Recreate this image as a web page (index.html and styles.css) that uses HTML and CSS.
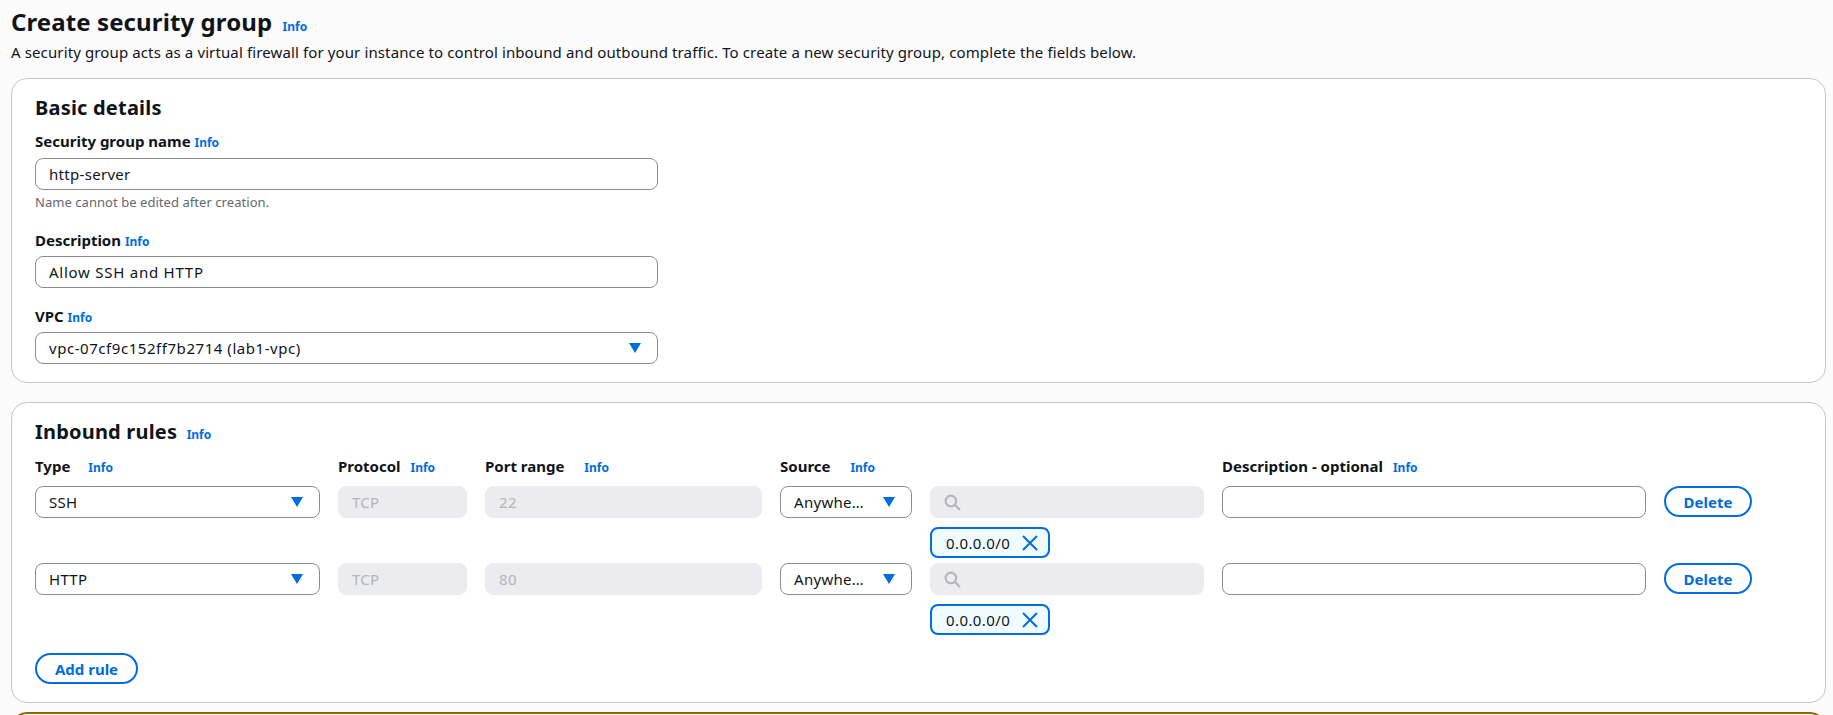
FILE: index.html
```html
<!DOCTYPE html>
<html lang="en">
<head>
  <meta charset="UTF-8" />
  <title>Create security group</title>
  <link rel="stylesheet" href="styles.css">
</head>
<body>
  <div class="page">
    <div class="page-head">
      <h1>Create security group <a class="info" href="#">Info</a></h1>
      <p>A security group acts as a virtual firewall for your instance to control inbound and outbound traffic. To create a new security group, complete the fields below.</p>
    </div>

    <section class="card card-basic">
      <h2>Basic details</h2>
      <div class="field">
        <label>Security group name <a class="info" href="#">Info</a></label>
        <div class="input">http-server</div>
        <div class="hint">Name cannot be edited after creation.</div>
      </div>
      <div class="field">
        <label>Description <a class="info" href="#">Info</a></label>
        <div class="input caps">Allow SSH and HTTP</div>
      </div>
      <div class="field">
        <label>VPC <a class="info" href="#">Info</a></label>
        <div class="input select vpc">
          <span>vpc-07cf9c152ff7b2714 (lab1-vpc)</span>
          <svg class="caret" viewBox="0 0 12 10"><path d="M0 0h12L6 10z"/></svg>
        </div>
      </div>
    </section>

    <section class="card card-rules">
      <h2>Inbound rules <a class="info" href="#">Info</a></h2>
      <div class="rules">
        <div class="col-label">Type <a class="info gap-14" href="#">Info</a></div>
        <div class="col-label">Protocol <a class="info gap-6" href="#">Info</a></div>
        <div class="col-label">Port range <a class="info gap-16" href="#">Info</a></div>
        <div class="col-label">Source <a class="info gap-16" href="#">Info</a></div>
        <div></div>
        <div class="col-label">Description - optional <a class="info gap-6" href="#">Info</a></div>
        <div></div>

        <div class="input select"><span>SSH</span><svg class="caret" viewBox="0 0 12 10"><path d="M0 0h12L6 10z"/></svg></div>
        <div class="input disabled">TCP</div>
        <div class="input disabled">22</div>
        <div class="input select"><span>Anywhe…</span><svg class="caret" viewBox="0 0 12 10"><path d="M0 0h12L6 10z"/></svg></div>
        <div class="source-cell">
          <div class="input disabled search">
            <svg viewBox="0 0 16 16"><circle cx="6.5" cy="6.5" r="5"/><path d="M10.2 10.2 15 15"/></svg>
          </div>
          <div class="token">0.0.0.0/0 <svg viewBox="0 0 16 16"><path d="M1 1l14 14M15 1 1 15"/></svg></div>
        </div>
        <div class="input"></div>
        <button class="btn">Delete</button>

        <div class="input select"><span>HTTP</span><svg class="caret" viewBox="0 0 12 10"><path d="M0 0h12L6 10z"/></svg></div>
        <div class="input disabled">TCP</div>
        <div class="input disabled">80</div>
        <div class="input select"><span>Anywhe…</span><svg class="caret" viewBox="0 0 12 10"><path d="M0 0h12L6 10z"/></svg></div>
        <div class="source-cell">
          <div class="input disabled search">
            <svg viewBox="0 0 16 16"><circle cx="6.5" cy="6.5" r="5"/><path d="M10.2 10.2 15 15"/></svg>
          </div>
          <div class="token">0.0.0.0/0 <svg viewBox="0 0 16 16"><path d="M1 1l14 14M15 1 1 15"/></svg></div>
        </div>
        <div class="input"></div>
        <button class="btn">Delete</button>
      </div>
      <button class="btn add-rule">Add rule</button>
    </section>

    <section class="card card-warning"></section>
  </div>
</body>
</html>
```

FILE: styles.css
```css
html, body {
  margin: 0;
  height: 100%;
  overflow: hidden;
}

body {
  font-family: "Noto Sans", sans-serif;
  font-size: 15px;
  color: #0f141a;
  background: #fbfbfc;
}

.page {
  box-sizing: border-box;
  height: 100vh;
  overflow: hidden;
  padding: 0 7px 0 11px;
}

.page-head {
  height: 78px;
  padding-top: 9px;
  box-sizing: border-box;
}

h1 {
  margin: 0;
  font-size: 24px;
  line-height: 26px;
  font-weight: 700;
  letter-spacing: .1px;
}

.page-head p {
  margin: 7px 0 0;
  line-height: 20px;
  letter-spacing: .12px;
}

h2 {
  margin: 0;
  font-size: 20px;
  line-height: 24px;
  font-weight: 700;
  letter-spacing: .2px;
}

.info {
  font-size: 12px;
  line-height: 1;
  font-weight: 700;
  letter-spacing: 0;
  color: #006ce0;
  text-decoration: none;
}

h1 .info, h2 .info {
  margin-left: 4px;
}

.gap-14 { margin-left: 14px; }
.gap-16 { margin-left: 16px; }
.gap-6 { margin-left: 6px; }

.card {
  background: #fff;
  border: 1px solid #c6c6cd;
  border-radius: 16px;
  box-sizing: border-box;
  padding: 17px 23px;
  margin-bottom: 19px;
}

.card-basic {
  height: 305px;
}

.card-rules {
  height: 301px;
  margin-bottom: 9px;
}

.card-warning {
  height: 40px;
  border: 2px solid #8d6605;
}

.field {
  width: 623px;
  margin-top: 11px;
}

.field + .field {
  margin-top: 18px;
}

label {
  display: block;
  font-weight: 700;
  line-height: 20px;
  margin-bottom: 7px;
}

.field + .field label {
  margin-bottom: 6px;
}

.input {
  box-sizing: border-box;
  height: 32px;
  border: 1px solid #8c8c94;
  border-radius: 8px;
  background: #fff;
  padding: 0 13px;
  line-height: 28px;
  letter-spacing: .3px;
  display: flex;
  align-items: center;
  justify-content: space-between;
}

.caps {
  letter-spacing: .75px;
}

.vpc {
  letter-spacing: .55px;
}

.select {
  padding-right: 16px;
}

.hint {
  font-size: 13px;
  line-height: 16px;
  letter-spacing: .05px;
  color: #656871;
  margin-top: 4px;
  padding-bottom: 2px;
}

.caret {
  width: 12px;
  height: 10px;
  flex: none;
  fill: #006ce0;
}

.disabled {
  background: #ebebf0;
  border-color: #ebebf0;
  color: #b4b4bb;
}

.rules {
  display: grid;
  grid-template-columns: 285px 129px 277px 132px 274px 424px 88px;
  column-gap: 18px;
  grid-template-rows: 20px 77px 77px;
  align-items: start;
  margin-top: 12px;
}

.col-label {
  font-weight: 700;
  line-height: 20px;
  white-space: nowrap;
}

.rules > .input, .rules > .btn, .source-cell {
  margin-top: 10px;
}

.search {
  justify-content: flex-start;
}

.search svg {
  width: 17px;
  height: 17px;
  fill: none;
  stroke: #b4b4bb;
  stroke-width: 2;
}

.token {
  box-sizing: border-box;
  display: inline-flex;
  align-items: center;
  gap: 12px;
  height: 31px;
  margin-top: 9px;
  padding: 0 10px 0 14px;
  border: 2px solid #006ce0;
  border-radius: 8px;
  background: #f0fbff;
  letter-spacing: .4px;
}

.token svg {
  width: 16px;
  height: 16px;
  fill: none;
  stroke: #006ce0;
  stroke-width: 2;
}

.btn {
  font-family: inherit;
  font-size: 15px;
  font-weight: 700;
  color: #006ce0;
  background: #fff;
  border: 2px solid #006ce0;
  border-radius: 20px;
  height: 31px;
  padding: 0;
  width: 88px;
}

.add-rule {
  display: block;
  width: 103px;
  margin-top: 23px;
}
```
